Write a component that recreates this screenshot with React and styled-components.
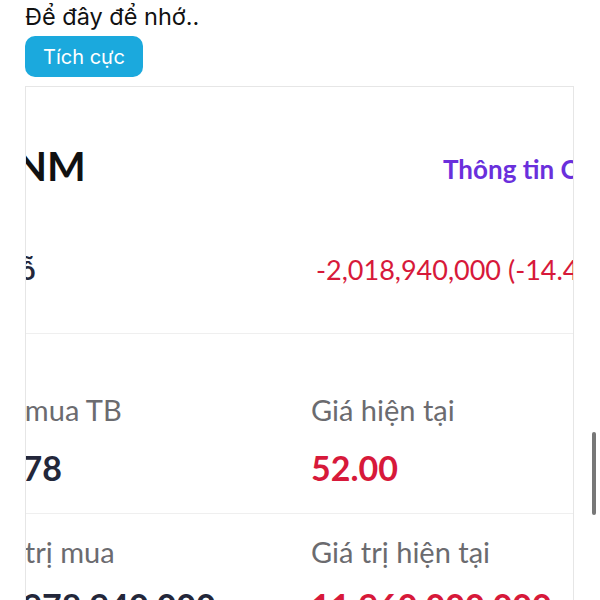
import styled, { createGlobalStyle } from 'styled-components';

const GlobalStyle = createGlobalStyle`
  html, body {
    margin: 0;
    background: #fff;
    overflow: hidden;
    height: 600px;
  }
  body {
    font-family: Inter, "Noto Sans", sans-serif;
  }
`;

const Page = styled.div`
  padding: 0 26px 0 25px;
  height: 600px;
  display: flex;
  flex-direction: column;
  align-items: flex-start;
`;

const Note = styled.p`
  margin: 0;
  font-size: 23.5px;
  line-height: 34px;
  color: #111;
`;

const Tag = styled.button`
  margin-top: 2px;
  height: 41px;
  padding: 0 18px;
  border: 0;
  border-radius: 10px;
  background: #1ba9dd;
  color: #fff;
  font-family: Inter, "Noto Sans", sans-serif;
  font-size: 20px;
`;

// screenshot of the app, cut on both sides by the frame
const Shot = styled.div`
  align-self: stretch;
  margin-top: 9px;
  flex: 1;
  border: 1px solid #e6e6e6;
  border-bottom: 0;
  overflow: hidden;
  font-family: Lato, "Noto Sans", sans-serif;
`;

const Inner = styled.div`
  margin-left: -60px;
  width: 760px;
`;

const Row = styled.div`
  display: grid;
  grid-template-columns: ${p => p.$col}px 1fr;
  align-items: ${p => p.$align || 'start'};
  padding-top: ${p => p.$top || 0}px;
  padding-bottom: ${p => p.$bottom || 0}px;
  border-bottom: ${p => (p.$line ? '1px solid #efefef' : '0')};
  white-space: nowrap;
`;

const Ticker = styled.div`
  padding-left: 21px;
  font-size: 41px;
  font-weight: 700;
  color: #111;
`;

const Link = styled.div`
  font-size: 26px;
  font-weight: 700;
  color: #6a2fdc;
  margin-top: 6px;
`;

const Cell = styled.div`
  padding-left: ${p => p.$pad || 0}px;
`;

const Label = styled.div`
  font-size: 29px;
  color: #6b6b6f;
`;

const Value = styled.div`
  margin-top: ${p => p.$gap ?? 14}px;
  font-size: ${p => p.$size || 34}px;
  font-weight: ${p => (p.$bold ? 700 : 400)};
  color: ${p => (p.$red ? '#d7193a' : '#23273a')};
`;

const Scrollbar = styled.div`
  position: fixed;
  right: 4px;
  top: 432px;
  width: 4px;
  height: 83px;
  border-radius: 2px;
  background: #777;
`;

export default function App() {
  return (
    <>
      <GlobalStyle />
      <Page>
        <Note>Để đây để nhớ..</Note>
        <Tag>Tích cực</Tag>
        <Shot>
          <Inner>
            <Row $col={477} $align="center" $top={54}>
              <Ticker>VNM</Ticker>
              <Link>Thông tin Cổ phiếu</Link>
            </Row>
            <Row $col={350} $align="center" $top={63} $bottom={47} $line>
              <Cell $pad={0}>
                <Value $gap={0} $size={27} $bold>Lãi/lỗ</Value>
              </Cell>
              <Value $gap={0} $size={27} $red>-2,018,940,000 (-14.45%)</Value>
            </Row>
            <Row $col={345} $top={58} $bottom={25} $line>
              <Cell $pad={9}>
                <Label>Giá mua TB</Label>
                <Value $gap={20} $bold>60.78</Value>
              </Cell>
              <Cell>
                <Label>Giá hiện tại</Label>
                <Value $gap={20} $bold $red>52.00</Value>
              </Cell>
            </Row>
            <Row $col={345} $top={20}>
              <Cell $pad={9}>
                <Label>Giá trị mua</Label>
                <Value $gap={16} $bold>13,978,940,000</Value>
              </Cell>
              <Cell>
                <Label>Giá trị hiện tại</Label>
                <Value $gap={16} $bold $red>11,960,000,000</Value>
              </Cell>
            </Row>
          </Inner>
        </Shot>
      </Page>
      <Scrollbar />
    </>
  );
}
